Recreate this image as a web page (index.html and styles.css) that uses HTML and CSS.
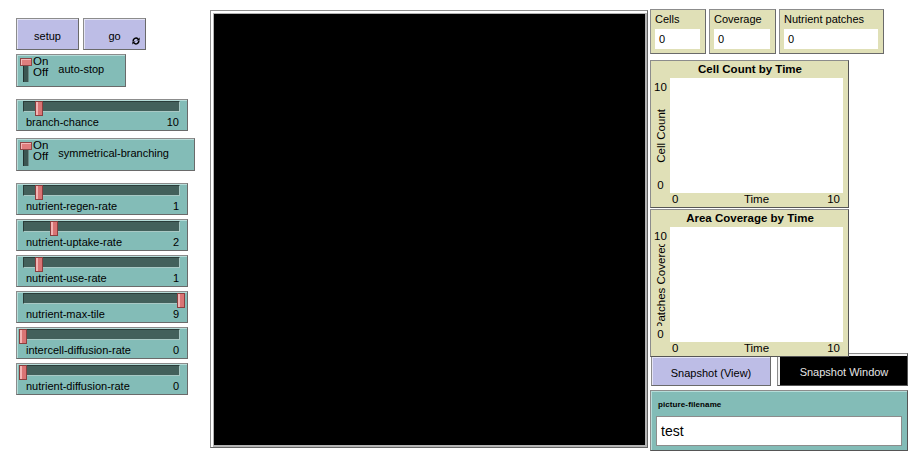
FILE: index.html
```html
<!DOCTYPE html>
<html>
<head>
<meta charset="utf-8">
<link rel="stylesheet" href="styles.css">
</head>
<body>
<div class="app">
  <div class="left">
    <div class="btn-row">
      <div class="btn setup">setup</div>
      <div class="btn go">go
        <svg class="forever" width="8" height="8" viewBox="0 0 8 8">
          <path d="M1.2 4.2A2.8 2.8 0 0 1 6 2" stroke="#000" stroke-width="1.5" fill="none"/>
          <path d="M7.6 0.4V3.6H4.4Z" fill="#000"/>
          <path d="M6.8 3.8A2.8 2.8 0 0 1 2 6" stroke="#000" stroke-width="1.5" fill="none"/>
          <path d="M0.4 7.6V4.4H3.6Z" fill="#000"/>
        </svg>
      </div>
    </div>

    <div class="switch sw-auto">
      <div class="toggle"><div class="knob"></div><div class="lever"></div></div>
      <div class="onoff"><span>On</span><span>Off</span></div>
      <div class="sw-label">auto-stop</div>
    </div>

    <div class="slider s-branch">
      <div class="rail"><div class="track"></div><div class="thumb" style="left:18px"></div></div>
      <div class="slider-label"><span>branch-chance</span><span>10</span></div>
    </div>

    <div class="switch sw-sym">
      <div class="toggle"><div class="knob"></div><div class="lever"></div></div>
      <div class="onoff"><span>On</span><span>Off</span></div>
      <div class="sw-label">symmetrical-branching</div>
    </div>

    <div class="slider-group">
      <div class="slider">
        <div class="rail"><div class="track"></div><div class="thumb" style="left:18px"></div></div>
        <div class="slider-label"><span>nutrient-regen-rate</span><span>1</span></div>
      </div>
      <div class="slider">
        <div class="rail"><div class="track"></div><div class="thumb" style="left:33px"></div></div>
        <div class="slider-label"><span>nutrient-uptake-rate</span><span>2</span></div>
      </div>
      <div class="slider">
        <div class="rail"><div class="track"></div><div class="thumb" style="left:18px"></div></div>
        <div class="slider-label"><span>nutrient-use-rate</span><span>1</span></div>
      </div>
      <div class="slider">
        <div class="rail"><div class="track"></div><div class="thumb" style="left:160px"></div></div>
        <div class="slider-label"><span>nutrient-max-tile</span><span>9</span></div>
      </div>
      <div class="slider">
        <div class="rail"><div class="track"></div><div class="thumb" style="left:2px"></div></div>
        <div class="slider-label"><span>intercell-diffusion-rate</span><span>0</span></div>
      </div>
      <div class="slider">
        <div class="rail"><div class="track"></div><div class="thumb" style="left:2px"></div></div>
        <div class="slider-label"><span>nutrient-diffusion-rate</span><span>0</span></div>
      </div>
    </div>
  </div>

  <div class="view"><div class="world"></div></div>

  <div class="right">
    <div class="monitors">
      <div class="monitor m-cells"><div class="m-label">Cells</div><div class="m-value">0</div></div>
      <div class="monitor m-cov"><div class="m-label">Coverage</div><div class="m-value">0</div></div>
      <div class="monitor m-nut"><div class="m-label">Nutrient patches</div><div class="m-value">0</div></div>
    </div>

    <div class="plot p1">
      <div class="p-title">Cell Count by Time</div>
      <div class="y-axis">
        <div class="y-max">10</div>
        <div class="y-name"><span>Cell Count</span></div>
        <div class="y-min">0</div>
      </div>
      <div class="chart"></div>
      <div class="x-axis"><span class="x-min">0</span><span class="x-name">Time</span><span class="x-max">10</span></div>
    </div>

    <div class="plot p2">
      <div class="p-title">Area Coverage by Time</div>
      <div class="y-axis">
        <div class="y-max">10</div>
        <div class="y-name"><span>Patches Covered</span></div>
        <div class="y-min">0</div>
      </div>
      <div class="chart"></div>
      <div class="x-axis"><span class="x-min">0</span><span class="x-name">Time</span><span class="x-max">10</span></div>
    </div>

    <div class="snap-row">
      <div class="btn snap-view">Snapshot (View)</div>
      <div class="snap-window">Snapshot Window</div>
    </div>

    <div class="input">
      <div class="in-label">picture-filename</div>
      <div class="in-box">test</div>
    </div>
  </div>
</div>
</body>
</html>
```

FILE: styles.css
```css
* { box-sizing: border-box; }

body {
  margin: 0;
  background: #ffffff;
  font-family: "Liberation Sans", Arial, sans-serif;
  font-size: 11px;
  color: #000;
}

.app {
  display: flex;
  align-items: flex-start;
}

/* ---------- left column ---------- */
.left {
  width: 179px;
  margin: 18px 0 0 16px;
  display: flex;
  flex-direction: column;
  align-items: flex-start;
}

.btn-row {
  display: flex;
  gap: 4px;
}

.btn {
  background: #bdbde6;
  border: 1px solid #8c8c8c;
  border-right-color: #6a6a6a;
  border-bottom-color: #6a6a6a;
  box-shadow: inset 1px 1px 0 #e4e4f6;
  display: flex;
  align-items: center;
  justify-content: center;
  padding-top: 3px;
}

.setup, .go {
  width: 63px;
  height: 32px;
}

.go {
  position: relative;
}

.forever {
  position: absolute;
  right: 5px;
  bottom: 4px;
}

.switch {
  background: #83bcb7;
  border: 1px solid #8c8c8c;
  border-right-color: #6a6a6a;
  border-bottom-color: #6a6a6a;
  box-shadow: inset 1px 1px 0 #b6dcd8;
  height: 33px;
  display: flex;
  align-items: flex-start;
}

.sw-auto { width: 110px; margin-top: 4px; }
.sw-sym { width: 179px; margin-top: 7px; }

.toggle {
  width: 12px;
  margin: 3px 0 0 3px;
  display: flex;
  flex-direction: column;
}

.knob {
  height: 8px;
  background: #e07e7e;
  border: 1px solid #8e4646;
  box-shadow: inset 1px 1px 0 #f4b8b8;
}

.lever {
  width: 6px;
  height: 16px;
  margin-left: 3px;
  background: #3c5652;
  border-left: 1px solid #223230;
  border-right: 1px solid #6d8c88;
}

.onoff {
  margin: 1px 0 0 1px;
  display: flex;
  flex-direction: column;
  line-height: 11px;
  font-size: 11.5px;
}

.sw-label {
  align-self: center;
  margin: -3px 0 0 10px;
}

.slider {
  width: 172px;
  height: 32px;
  background: #83bcb7;
  border: 1px solid #8c8c8c;
  border-right-color: #6a6a6a;
  border-bottom-color: #6a6a6a;
  box-shadow: inset 1px 1px 0 #b6dcd8;
}

.s-branch { margin-top: 12px; }

.slider-group {
  margin-top: 12px;
  display: flex;
  flex-direction: column;
  gap: 4px;
}

.rail {
  position: relative;
  height: 15px;
  margin-top: 1px;
}

.track {
  margin: 1px 7px 0 6px;
  height: 11px;
  background: #43605b;
  border: 1px solid;
  border-color: #2a3c39 #a9c9c5 #a9c9c5 #2a3c39;
}

.thumb {
  position: absolute;
  top: 0;
  width: 8px;
  height: 15px;
  background: linear-gradient(to right, #f2b4b4 0, #f2b4b4 2px, #d97474 2px);
  border: 1px solid #8a3e3e;
}

.slider-label {
  display: flex;
  justify-content: space-between;
  line-height: 13px;
  padding: 0 8px 0 9px;
}

/* ---------- view ---------- */
.view {
  width: 438px;
  height: 438px;
  margin: 10px 0 0 15px;
  background: #fff;
  border: 1px solid #8e8e8e;
  border-right-color: #666;
  border-bottom-color: #666;
  padding: 2px 0 0 2px;
}

.world {
  width: 100%;
  height: 100%;
  background: #000;
  border: 1px solid #b4b4b4;
  border-right-width: 2px;
  border-bottom-width: 2px;
}

/* ---------- right column ---------- */
.right {
  width: 258px;
  margin: 9px 0 0 2px;
  display: flex;
  flex-direction: column;
  align-items: flex-start;
}

.monitors {
  display: flex;
  gap: 3px;
}

.monitor {
  background: #e0e0b7;
  border: 1px solid #8c8c8c;
  border-right-color: #6a6a6a;
  border-bottom-color: #6a6a6a;
  height: 45px;
  padding: 3px 5px 4px 4px;
}

.m-cells { width: 56px; }
.m-cov { width: 67px; }
.m-nut { width: 105px; }

.m-label {
  line-height: 13px;
}

.m-value {
  margin-top: 3px;
  height: 20px;
  line-height: 20px;
  background: #fff;
  padding-left: 4px;
}

.plot {
  position: relative;
  z-index: 1;
  width: 199px;
  height: 148px;
  background: #e0e0b7;
  border: 1px solid #8c8c8c;
  border-right-color: #555;
  border-bottom-color: #555;
  display: grid;
  grid-template-columns: 19px 173px;
  grid-template-rows: 17px 115px 1fr;
}

.p1 { margin-top: 6px; }
.p2 { margin-top: 1px; }

.p-title {
  grid-column: 1 / 3;
  text-align: center;
  font-weight: bold;
  font-size: 11.5px;
  line-height: 16px;
  padding-left: 6px;
}

.y-axis {
  display: flex;
  flex-direction: column;
  align-items: center;
}

.y-max {
  line-height: 12px;
  padding-top: 3px;
  font-size: 11.5px;
}

.y-min {
  line-height: 12px;
  padding-bottom: 2px;
  font-size: 11.5px;
}

.y-name {
  flex: 1;
  overflow: hidden;
  display: flex;
  align-items: center;
  justify-content: center;
  width: 19px;
  margin: 2px 0;
}

.y-name span {
  writing-mode: vertical-rl;
  transform: rotate(180deg);
  white-space: nowrap;
  font-size: 11.5px;
  line-height: 14px;
}

.chart {
  background: #fff;
}

.x-axis {
  grid-column: 2;
  display: grid;
  grid-template-columns: 1fr auto 1fr;
  font-size: 11.5px;
  line-height: 13px;
}

.x-min { padding-left: 2px; }
.x-name { text-align: center; }
.x-max { text-align: right; padding-right: 3px; }

.snap-row {
  display: flex;
  align-items: flex-start;
  margin-top: -4px;
}

.snap-view {
  width: 120px;
  height: 30px;
  margin: 3px 0 0 1px;
}

.snap-window {
  width: 131px;
  height: 33px;
  margin-left: 6px;
  background: #000;
  color: #e6e6e6;
  border: 1px solid #8c8c8c;
  border-right-color: #555;
  border-bottom-color: #555;
  box-shadow: inset 2px 2px 0 #f2f2f2;
  display: flex;
  align-items: center;
  justify-content: center;
  padding: 5px 0 0 3px;
}

.input {
  width: 258px;
  height: 61px;
  margin-top: 4px;
  background: #83bcb7;
  border: 1px solid #8c8c8c;
  border-right-color: #555;
  border-bottom-color: #555;
  box-shadow: inset 1px 1px 0 #b6dcd8;
  padding: 9px 5px 3px 5px;
}

.in-label {
  font-weight: bold;
  font-size: 8px;
  letter-spacing: 0.1px;
  line-height: 10px;
  padding-left: 2px;
}

.in-box {
  margin-top: 6px;
  height: 30px;
  background: #fff;
  border: 1px solid #8c8c8c;
  font-size: 14px;
  line-height: 28px;
  padding-left: 4px;
}
```
